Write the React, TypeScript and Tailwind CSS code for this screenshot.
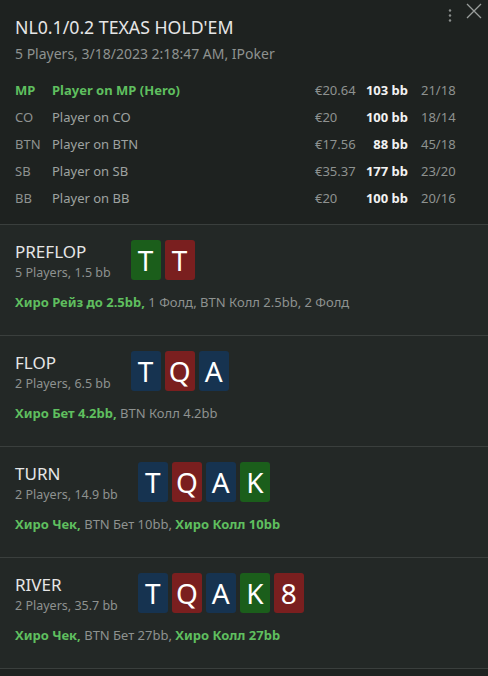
import React from "react";

type Card = { r: string; c: "g" | "r" | "b" };

const cardBg: Record<string, string> = {
  g: "bg-[#1b5e1b]",
  r: "bg-[#7a1f1f]",
  b: "bg-[#163350]",
};

const players = [
  { pos: "MP", name: "Player on MP (Hero)", amt: "€20.64", bb: "103 bb", st: "21/18", hero: true },
  { pos: "CO", name: "Player on CO", amt: "€20", bb: "100 bb", st: "18/14" },
  { pos: "BTN", name: "Player on BTN", amt: "€17.56", bb: "88 bb", st: "45/18" },
  { pos: "SB", name: "Player on SB", amt: "€35.37", bb: "177 bb", st: "23/20" },
  { pos: "BB", name: "Player on BB", amt: "€20", bb: "100 bb", st: "20/16" },
];

type Seg = { t: string; g?: boolean };

const streets: { name: string; sub: string; cards: Card[]; actions: Seg[] }[] = [
  {
    name: "PREFLOP",
    sub: "5 Players, 1.5 bb",
    cards: [
      { r: "T", c: "g" },
      { r: "T", c: "r" },
    ],
    actions: [
      { t: "Хиро Рейз до 2.5bb,", g: true },
      { t: " 1 Фолд, BTN Колл 2.5bb, 2 Фолд" },
    ],
  },
  {
    name: "FLOP",
    sub: "2 Players, 6.5 bb",
    cards: [
      { r: "T", c: "b" },
      { r: "Q", c: "r" },
      { r: "A", c: "b" },
    ],
    actions: [
      { t: "Хиро Бет 4.2bb,", g: true },
      { t: " BTN Колл 4.2bb" },
    ],
  },
  {
    name: "TURN",
    sub: "2 Players, 14.9 bb",
    cards: [
      { r: "T", c: "b" },
      { r: "Q", c: "r" },
      { r: "A", c: "b" },
      { r: "K", c: "g" },
    ],
    actions: [
      { t: "Хиро Чек,", g: true },
      { t: " BTN Бет 10bb, " },
      { t: "Хиро Колл 10bb", g: true },
    ],
  },
  {
    name: "RIVER",
    sub: "2 Players, 35.7 bb",
    cards: [
      { r: "T", c: "b" },
      { r: "Q", c: "r" },
      { r: "A", c: "b" },
      { r: "K", c: "g" },
      { r: "8", c: "r" },
    ],
    actions: [
      { t: "Хиро Чек,", g: true },
      { t: " BTN Бет 27bb, " },
      { t: "Хиро Колл 27bb", g: true },
    ],
  },
];

export default function App() {
  return (
    <div
      className="w-[488px] h-[676px] bg-[#1e2220] text-[#e4e4e4] overflow-hidden relative"
      style={{ fontFamily: '"Noto Sans", "Open Sans", sans-serif' }}
    >
      <div className="absolute right-[6px] top-[3px] flex items-start gap-[14px]">
        <svg width="4" height="16" viewBox="0 0 4 16" className="mt-[6px]">
          <circle cx="2" cy="1.5" r="1.2" fill="#8a8e8c" />
          <circle cx="2" cy="6.5" r="1.2" fill="#8a8e8c" />
          <circle cx="2" cy="11.5" r="1.2" fill="#8a8e8c" />
        </svg>
        <svg width="16" height="16" viewBox="0 0 16 16">
          <path d="M1 1 L15 15 M15 1 L1 15" stroke="#9a9e9c" strokeWidth="1.3" />
        </svg>
      </div>

      <div className="pt-[15px] pl-[15px] pr-[15px] pb-[12px] border-b border-[#3a3f3d]">
        <div className="text-[17.7px] leading-[24px] text-[#e6e6e6]">NL0.1/0.2 TEXAS HOLD'EM</div>
        <div className="mt-[5px] text-[14px] leading-[20px] text-[#8e9290]">
          5 Players, 3/18/2023 2:18:47 AM, IPoker
        </div>
        <div className="mt-[13px] flex flex-col">
          {players.map((p) => (
            <div key={p.pos} className="h-[27px] flex items-center text-[13px] whitespace-nowrap">
              <div
                className={
                  "w-[37px] shrink-0 " + (p.hero ? "text-[#5fbf5f] font-bold" : "text-[#8e9290]")
                }
              >
                {p.pos}
              </div>
              <div
                className={
                  "w-[263px] shrink-0 " + (p.hero ? "text-[#5fbf5f] font-bold" : "text-[#9ea2a0]")
                }
              >
                {p.name}
              </div>
              <div className="w-[50px] shrink-0 text-[#8e9290]">{p.amt}</div>
              <div className="w-[43px] shrink-0 text-right font-bold text-[#f2f2f2]">{p.bb}</div>
              <div className="ml-[13px] text-[#8e9290]">{p.st}</div>
            </div>
          ))}
        </div>
      </div>

      {streets.map((s) => (
        <div
          key={s.name}
          className="bg-[#232826] border-b border-[#3a3f3d] h-[111px] pt-[15px] px-[15px]"
        >
          <div className="flex items-start gap-[20px]">
            <div className="flex flex-col">
              <div className="text-[17px] leading-[24px] text-[#e6e6e6]">{s.name}</div>
              <div className="text-[12.5px] leading-[18px] text-[#8e9290]">{s.sub}</div>
            </div>
            <div className="flex gap-[4px]">
              {s.cards.map((c, i) => (
                <div
                  key={i}
                  className={
                    "w-[30px] h-[40px] rounded-[3px] flex items-center justify-center text-white text-[28px] " +
                    cardBg[c.c]
                  }
                >
                  {c.r}
                </div>
              ))}
            </div>
          </div>
          <div className="mt-[11px] text-[13px] leading-[18px] text-[#8e9290]">
            {s.actions.map((a, i) => (
              <span key={i} className={a.g ? "text-[#5fbf5f] font-bold" : ""}>
                {a.t}
              </span>
            ))}
          </div>
        </div>
      ))}
    </div>
  );
}
